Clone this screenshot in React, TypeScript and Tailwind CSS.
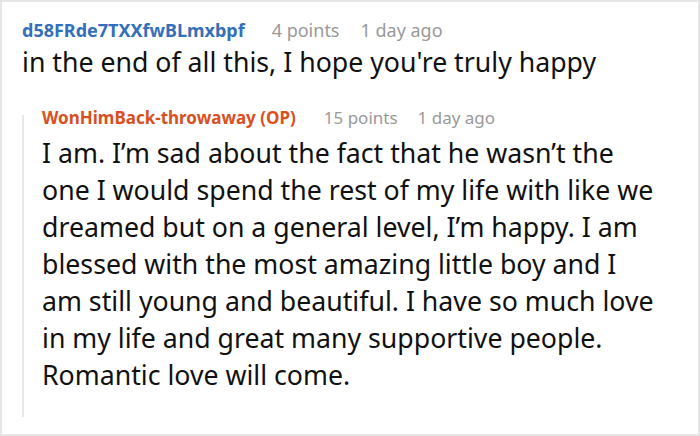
const replyLines = [
  "I am. I’m sad about the fact that he wasn’t the",
  "one I would spend the rest of my life with like we",
  "dreamed but on a general level, I’m happy. I am",
  "blessed with the most amazing little boy and I",
  "am still young and beautiful. I have so much love",
  "in my life and great many supportive people.",
  "Romantic love will come.",
];

export default function App() {
  return (
    <div
      className="w-[700px] h-[436px] overflow-hidden bg-white border-2 border-[#e6e6e6] text-[#111]"
      style={{ fontFamily: '"Noto Sans", "Open Sans", sans-serif' }}
    >
      <div className="pl-[20px] pt-[16px]">
        <div className="flex items-baseline text-[18px] leading-[24px]">
          <span className="font-bold text-[#336fba]">d58FRde7TXXfwBLmxbpf</span>
          <span className="ml-[27px] text-[#999]">4 points</span>
          <span className="ml-[21px] text-[#999]">1 day ago</span>
        </div>
        <p className="text-[26.7px] leading-[37px] mt-[1px]">
          in the end of all this, I hope you're truly happy
        </p>
        <div className="mt-[26px] flex">
          <div className="w-[2px] bg-[#e8e8e8] mt-[9px]" />
          <div className="pl-[18px] pb-[24px]">
            <div className="flex items-baseline text-[17px] leading-[24px]">
              <span className="font-bold text-[#d9501e]">WonHimBack-throwaway (OP)</span>
              <span className="ml-[28px] text-[#999]">15 points</span>
              <span className="ml-[20px] text-[#999]">1 day ago</span>
            </div>
            <p className="text-[26.7px] leading-[37px] mt-[4px] whitespace-nowrap">
              {replyLines.map((line, i) => (
                <span key={i} className="block">
                  {line}
                </span>
              ))}
            </p>
          </div>
        </div>
      </div>
    </div>
  );
}
